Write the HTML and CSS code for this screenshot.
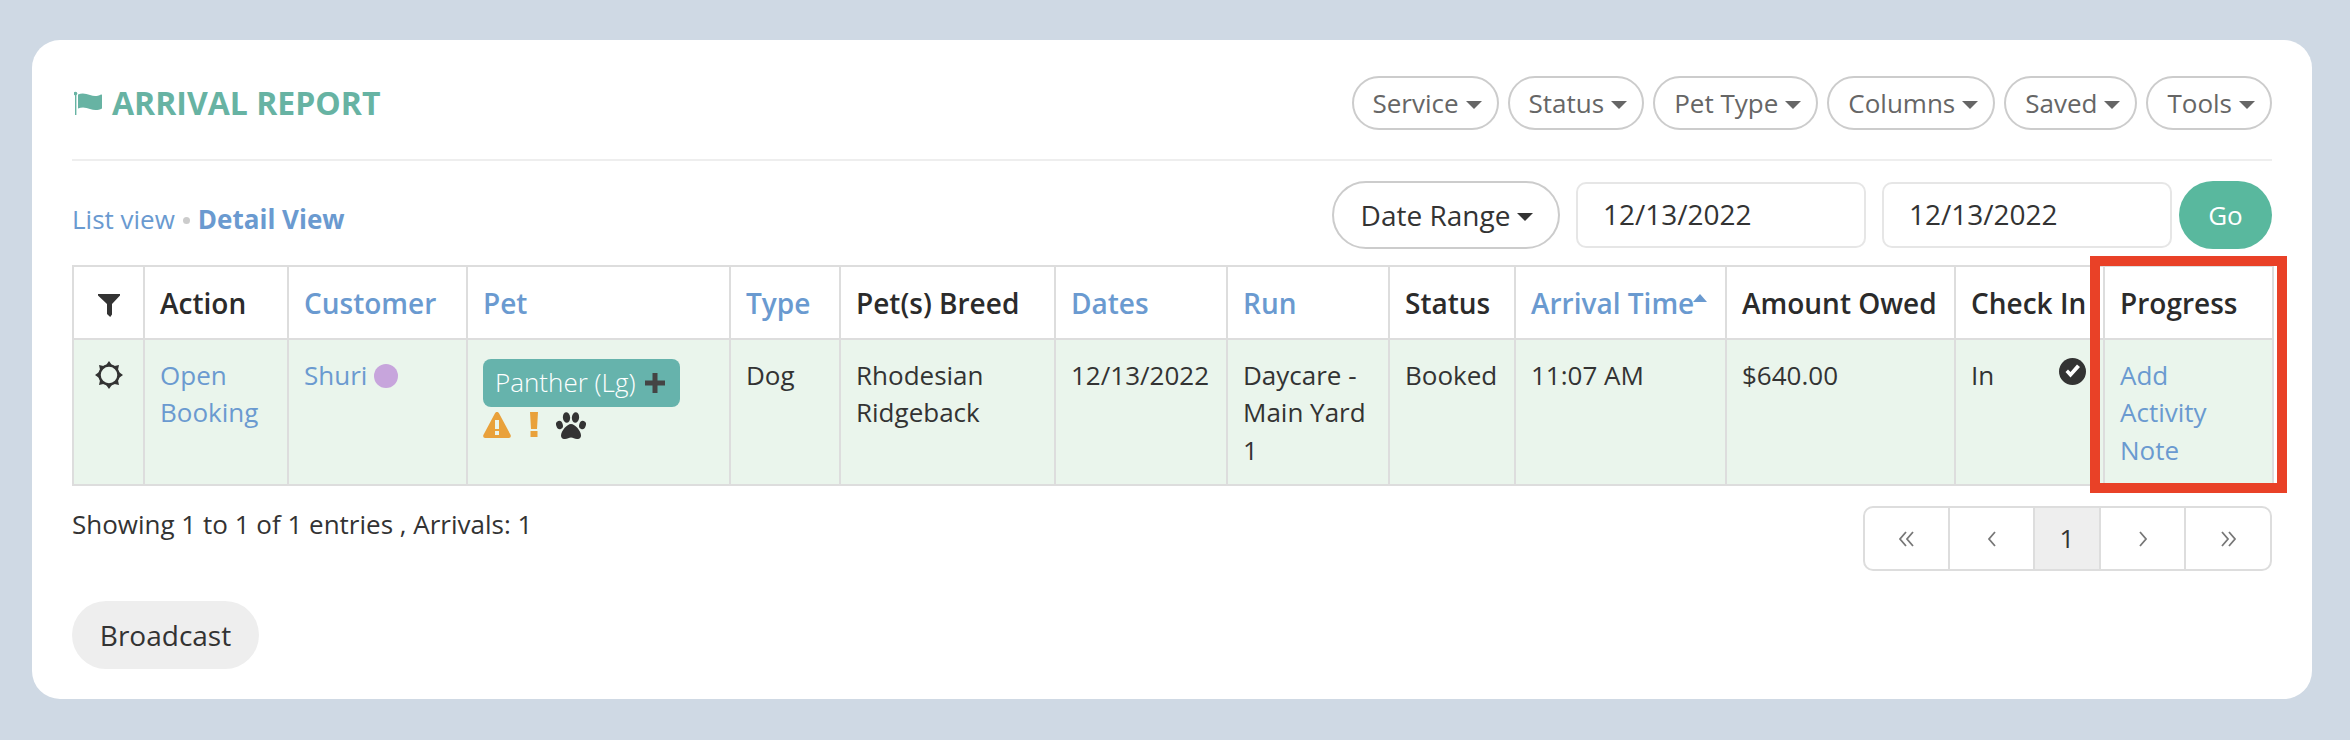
FILE: index.html
```html
<!DOCTYPE html>
<html lang="en">
<head>
<meta charset="utf-8">
<title>Arrival Report</title>
<link rel="stylesheet" href="styles.css">
</head>
<body>
<main class="card">
  <header class="head">
    <h1 class="title">
      <svg class="flag" viewBox="0 0 28 24"><circle cx="1.500" cy="2.500" r="1.800"/><rect x="1" y="3" width="1.400" height="21"/><path d="M4 3.500c4-2 8-1 12 .5s7 1.500 11-.5c1 0 1 .3 1 1v13c-4 2-8 2-12 .5s-8-2-12-.5z"/></svg>
      ARRIVAL REPORT
    </h1>
    <nav class="tools">
      <button class="pill">Service <i class="caret"></i></button>
      <button class="pill">Status <i class="caret"></i></button>
      <button class="pill">Pet Type <i class="caret"></i></button>
      <button class="pill">Columns <i class="caret"></i></button>
      <button class="pill">Saved <i class="caret"></i></button>
      <button class="pill">Tools <i class="caret"></i></button>
    </nav>
  </header>
  <section class="filters">
    <div class="views"><a class="link">List view</a> <span class="dot"></span> <a class="link strong">Detail View</a></div>
    <div class="dates">
      <button class="range">Date Range <i class="caret"></i></button>
      <div class="date">12/13/2022</div>
      <div class="date">12/13/2022</div>
      <button class="go">Go</button>
    </div>
  </section>
  <div class="table-wrap">
    <table class="report">
      <colgroup>
        <col class="c1"><col class="c2"><col class="c3"><col class="c4"><col class="c5"><col class="c6"><col class="c7"><col class="c8"><col class="c9"><col class="c10"><col class="c11"><col class="c12"><col class="c13">
      </colgroup>
      <thead>
        <tr>
          <th class="icon-cell"><svg class="filter" viewBox="0 0 22 23"><path d="M0 0h22v1.500l-8 8.500v10.500l-1.800 2.500-3.200-3V10L0 1.500z"/></svg></th>
          <th>Action</th>
          <th class="sort">Customer</th>
          <th class="sort">Pet</th>
          <th class="sort">Type</th>
          <th>Pet(s) Breed</th>
          <th class="sort">Dates</th>
          <th class="sort">Run</th>
          <th>Status</th>
          <th class="sort"><span class="sorted">Arrival Time<i class="up"></i></span></th>
          <th>Amount Owed</th>
          <th>Check In</th>
          <th>Progress</th>
        </tr>
      </thead>
      <tbody>
        <tr>
          <td class="icon-cell"><svg class="sun" viewBox="0 0 28 28"><circle cx="14" cy="14" r="9.500"/><path class="ray" d="M14 0l3.200 4.500h-6.400zM14 28l3.200-4.500h-6.400zM0 14l4.500-3.200v6.400zM28 14l-4.500-3.200v6.400zM4 4l5.500 1.200L5.200 9.500zM24 4l-5.500 1.200 4.300 4.300zM4 24l5.500-1.200-4.300-4.300zM24 24l-5.500-1.200 4.300-4.300z"/></svg></td>
          <td><a class="link">Open Booking</a></td>
          <td><a class="link">Shuri</a> <span class="status-dot"></span></td>
          <td>
            <span class="badge">Panther (Lg) <svg class="plus" viewBox="0 0 20 20"><path d="M7.500 0h5v7.500H20v5h-7.500V20h-5v-7.500H0v-5h7.500z"/></svg></span>
            <div class="flags">
              <svg class="warn" viewBox="0 0 28 26"><path fill-rule="evenodd" d="M14 0c.8 0 1.500.5 2 1.300l11.500 21.500c.8 1.500 0 3.200-1.700 3.200H2.200C.5 26-.3 24.300.5 22.800L12 1.300C12.500.5 13.200 0 14 0zM12 8v9h4V8zM12 19v4h4v-4z"/></svg>
              <svg class="bang" viewBox="0 0 8 25"><path d="M0 0h8l-1 17H1zM.5 19h7v6h-7z"/></svg>
              <svg class="paw" viewBox="0 0 30 27"><ellipse cx="3.500" cy="13" rx="3.300" ry="4.300" transform="rotate(-18 3.500 13)"/><ellipse cx="10.500" cy="5.500" rx="3.600" ry="5.300" transform="rotate(-6 10.500 5.500)"/><ellipse cx="19.500" cy="5.500" rx="3.600" ry="5.300" transform="rotate(6 19.500 5.500)"/><ellipse cx="26.500" cy="13" rx="3.300" ry="4.300" transform="rotate(18 26.500 13)"/><path d="M15 12c4 0 10 7 10 11.500 0 3-2.500 3.500-4 3.500-2.500 0-4-1.500-6-1.500S11.500 27 9 27c-1.500 0-4-.5-4-3.500C5 19 11 12 15 12z"/></svg>
            </div>
          </td>
          <td>Dog</td>
          <td>Rhodesian Ridgeback</td>
          <td>12/13/2022</td>
          <td>Daycare - Main Yard 1</td>
          <td>Booked</td>
          <td>11:07 AM</td>
          <td>$640.00</td>
          <td>
            <div class="checkin">In <svg class="check" viewBox="0 0 27 27"><circle cx="13.500" cy="13.500" r="13.500"/><path d="M6.500 14l5 5.500 9.500-10.500-3-2.500-6.500 7.500-2.500-2.500z" fill="#fff"/></svg></div>
          </td>
          <td><a class="link">Add Activity Note</a></td>
        </tr>
      </tbody>
    </table>
    <div class="callout"></div>
  </div>
  <footer class="foot">
    <div class="entries">Showing 1 to 1 of 1 entries , Arrivals: 1</div>
    <nav class="pager">
      <span class="page"><svg class="chev" viewBox="0 0 18 18"><path d="M8 2L2 9l6 7M15 2L9 9l6 7"/></svg></span>
      <span class="page"><svg class="chev" viewBox="0 0 18 18"><path d="M12 2L6 9l6 7"/></svg></span>
      <span class="page current">1</span>
      <span class="page"><svg class="chev" viewBox="0 0 18 18"><path d="M6 2l6 7-6 7"/></svg></span>
      <span class="page"><svg class="chev" viewBox="0 0 18 18"><path d="M3 2l6 7-6 7M10 2l6 7-6 7"/></svg></span>
    </nav>
  </footer>
  <button class="broadcast">Broadcast</button>
</main>
</body>
</html>
```
FILE: styles.css
```css
* { box-sizing: border-box; }
html, body { margin: 0; height: 100%; }
body {
  background: #cfd9e4;
  padding: 40px 38px 41px 32px;
  font-family: "Open Sans", "Liberation Sans", sans-serif;
  font-size: 26px;
  line-height: 37.5px;
  color: #333;
}
button { font-family: inherit; cursor: pointer; margin: 0; }
.card {
  height: 659px;
  background: #fff;
  border-radius: 28px;
  padding: 0 40px;
}
.head {
  height: 121px;
  border-bottom: 2px solid #eee;
  display: flex;
  align-items: center;
  justify-content: space-between;
  padding-top: 7px;
}
.title {
  margin: 0;
  display: flex;
  align-items: center;
  gap: 10px;
  font-size: 32px;
  line-height: 40px;
  font-weight: 700;
  color: #67b3a3;
  padding-left: 2px;
}
.flag { width: 28px; height: 24px; fill: #67b3a3; }
.tools { display: flex; gap: 9px; }
.pill {
  height: 54px;
  padding: 0 15px 0 19px;
  border: 2px solid #ccc;
  border-radius: 27px;
  background: #fff;
  color: #666;
  font-size: 26px;
  white-space: nowrap;
  display: flex;
  align-items: center;
  gap: 7px;
}
.caret {
  display: inline-block;
  width: 0;
  height: 0;
  border-left: 8px solid transparent;
  border-right: 8px solid transparent;
  border-top: 8px solid currentColor;
  margin-top: 3px;
}
.filters {
  display: flex;
  align-items: center;
  justify-content: space-between;
  margin-top: 20px;
  height: 68px;
}
.views { padding-top: 9px; display: flex; gap: 8px; align-items: center; }
.link { color: #6a9ad0; }
.strong { font-weight: 700; }
.dot { width: 7px; height: 7px; border-radius: 50%; background: #ccc; margin-top: 2px; }
.dates { display: flex; align-items: center; gap: 16px; }
.range {
  height: 68px;
  width: 228px;
  border: 2px solid #ccc;
  border-radius: 34px;
  background: #fff;
  color: #333;
  font-size: 28px;
  display: flex;
  align-items: center;
  justify-content: center;
  gap: 7px;
  white-space: nowrap;
  padding: 0 0 0 2px;
}
.date {
  width: 290px;
  height: 66px;
  border: 2px solid #e6e6e6;
  border-radius: 10px;
  padding: 0 25px;
  display: flex;
  align-items: center;
  font-size: 28px;
}
.go {
  width: 93px;
  height: 68px;
  margin-left: -9px;
  border: 0;
  border-radius: 34px;
  background: #59b89e;
  color: #fff;
  font-size: 26px;
}
.table-wrap { position: relative; margin-top: 16px; }
.report {
  width: 2200px;
  table-layout: fixed;
  border-collapse: collapse;
  border: 2px solid #ddd;
}
.c1 { width: 71px; } .c2 { width: 144px; } .c3 { width: 179px; } .c4 { width: 263px; }
.c5 { width: 110px; } .c6 { width: 215px; } .c7 { width: 172px; } .c8 { width: 162px; }
.c9 { width: 126px; } .c10 { width: 211px; } .c11 { width: 229px; } .c12 { width: 149px; }
.c13 { width: 169px; }
.report th, .report td {
  border: 2px solid #ddd;
  padding: 17px 15px 15px;
  text-align: left;
  vertical-align: top;
  font-weight: 400;
}
.report th { font-weight: 600; font-size: 28px; height: 72px; padding: 18px 15px 15px; white-space: nowrap; color: #2b2b2b; }
.report td { height: 146px; background: #eaf5ec; }
.report th.sort { color: #6a9ad0; }
.report .icon-cell { padding: 0; text-align: center; }
.filter { width: 22px; height: 23px; fill: #333; display: block; margin: 27px auto 0; }
.sun { width: 28px; height: 28px; display: block; margin: 21px auto 0; fill: none; stroke: #333; stroke-width: 2.500; }
.sun .ray { fill: #333; stroke: none; }
.sorted { position: relative; display: inline-block; }
.up {
  position: absolute;
  right: -13px;
  top: 9px;
  border-left: 7px solid transparent;
  border-right: 7px solid transparent;
  border-bottom: 8px solid #6a9ad0;
}
.status-dot {
  display: inline-block;
  width: 24px;
  height: 24px;
  border-radius: 50%;
  background: #c7a5dc;
  vertical-align: -3px;
}
.badge {
  display: flex;
  width: 197px;
  align-items: center;
  gap: 9px;
  height: 48px;
  margin-top: 2px;
  padding: 0 12px;
  border-radius: 8px;
  background: #66b3ac;
  color: #fff;
  white-space: nowrap;
  font-weight: 300;
}
.plus { width: 20px; height: 20px; fill: #444; }
.flags { display: flex; align-items: flex-start; margin-top: 5px; height: 27px; }
.warn { width: 28px; height: 26px; fill: #e9a13b; }
.bang { width: 8px; height: 25px; fill: #e9a13b; margin-left: 19px; }
.paw { width: 30px; height: 27px; fill: #333; margin-left: 18px; }
.checkin { display: flex; justify-content: space-between; margin-right: 2px; }
.check { width: 27px; height: 27px; fill: #333; margin-top: 1px; }
.callout {
  position: absolute;
  left: 2018px;
  top: -9px;
  width: 197px;
  height: 237px;
  border: 10px solid #e94127;
  pointer-events: none;
}
.foot {
  display: flex;
  justify-content: space-between;
  align-items: flex-start;
  margin-top: 20px;
}
.pager {
  display: flex;
  height: 65px;
  border: 2px solid #ddd;
  border-radius: 10px;
  overflow: hidden;
  color: #777;
}
.page {
  width: 85px;
  display: flex;
  align-items: center;
  justify-content: center;
  border-right: 2px solid #ddd;
}
.page:last-child { border-right: 0; width: 84px; }
.page.current { width: 66px; background: #eee; color: #333; }
.chev { width: 18px; height: 18px; fill: none; stroke: #777; stroke-width: 1.800; }
.broadcast {
  display: block;
  width: 187px;
  height: 68px;
  margin-top: 30px;
  border: 0;
  border-radius: 34px;
  background: #eee;
  color: #333;
  font-size: 28px;
}
```
